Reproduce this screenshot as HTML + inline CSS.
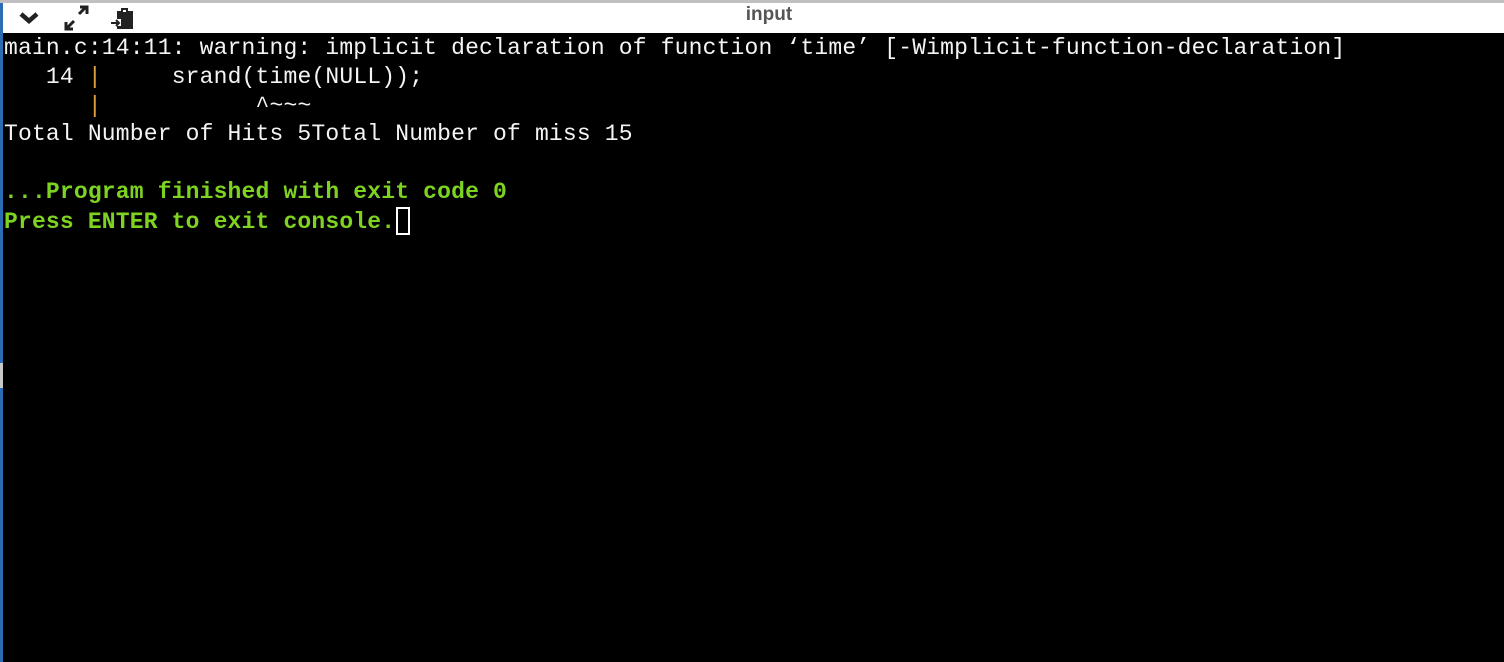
<!DOCTYPE html>
<html><head><style>
html,body{margin:0;padding:0;width:1504px;height:662px;overflow:hidden;background:#000;}
.top{position:absolute;left:0;top:0;width:1504px;height:3px;background:#c0c0c0;}
.bar{position:absolute;left:0;top:3px;width:1504px;height:30px;background:#fff;}
.title{position:absolute;left:0;width:1538px;top:4px;text-align:center;font:bold 19px "Liberation Sans",sans-serif;color:#555;}
.strip{position:absolute;left:0;top:3px;width:3px;height:659px;background:#2a6db5;}
.term{position:absolute;left:4px;top:34px;font-family:"Liberation Mono",monospace;font-size:23px;letter-spacing:0.17px;line-height:28.8px;color:#f4f4f4;white-space:pre;}
.y{color:#e0a040}.g{color:#7ed321;font-weight:bold}
.cur{display:inline-block;width:14px;height:28px;border:2px solid #fff;box-sizing:border-box;vertical-align:-7px;margin-left:1px}
</style></head><body>
<div class="top"></div>
<div class="bar"></div>
<div class="strip"></div>
<div style="position:absolute;left:0;top:363px;width:3px;height:25px;background:#c8c8c8"></div>
<div class="title">input</div>
<svg style="position:absolute;left:0;top:3px" width="140" height="30">
<path d="M21 11 L29 18 L37 11" stroke="#222" stroke-width="4.5" fill="none"/>
<path d="M67 25 L74 18 M66 19 V26 H73" stroke="#222" stroke-width="3" fill="none"/>
<path d="M79 11 L86 4 M80 4 H87 V11" stroke="#222" stroke-width="3" fill="none"/>
<rect x="117" y="8" width="16" height="18" fill="#222"/>
<rect x="121" y="5" width="7" height="5" fill="#222"/>
<rect x="123" y="7" width="3" height="2" fill="#fff"/>
<rect x="114" y="16" width="7" height="7" fill="#fff"/>
<path d="M111 20 H119 M116 17 L119 20 L116 23" stroke="#222" stroke-width="2" fill="none" />
</svg>
<div class="term">main.c:14:11: warning: implicit declaration of function ‘time’ [-Wimplicit-function-declaration]
   14 <span class="y">|</span>     srand(time(NULL));
      <span class="y">|</span>           ^~~~
Total Number of Hits 5Total Number of miss 15

<span class="g">...Program finished with exit code 0</span>
<span class="g">Press ENTER to exit console.</span><span class="cur"></span></div>
</body></html>
